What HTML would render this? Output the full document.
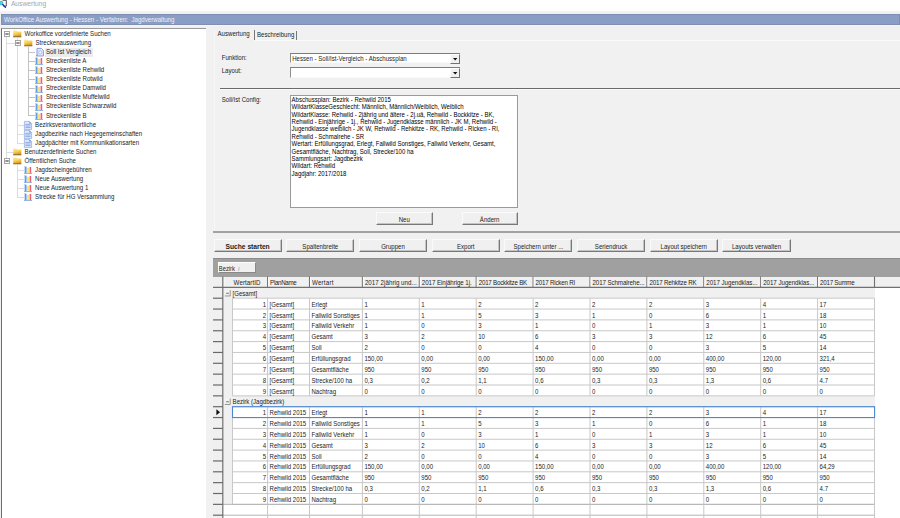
<!DOCTYPE html>
<html><head><meta charset="utf-8"><title>Auswertung</title>
<style>
html,body{margin:0;padding:0;}
body{width:900px;height:518px;overflow:hidden;background:#f0f0f0;position:relative;font-family:"Liberation Sans",sans-serif;}
.t{position:absolute;white-space:pre;}
.b{position:absolute;box-sizing:border-box;}
svg{position:absolute;overflow:visible;}
</style></head><body>

<div class="b" style="left:0.00px;top:0.00px;width:900.00px;height:12.00px;background:#ffffff;background:linear-gradient(#fff 0,#fff 84%,#f0f0f0 100%);"></div>
<div class="t" style="left:10.90px;top:-0.60px;height:10px;line-height:10px;font-size:6.7px;color:#a6a6a6;transform:scaleY(1.16);">Auswertung</div>
<svg style="left:0;top:0" width="8" height="9" viewBox="0 0 8 9"><path d="M2.6 0.3H6.3V6.1H3.4" fill="#fff" stroke="#3c3c3c" stroke-width="0.9"/><circle cx="1.1" cy="3.1" r="2" fill="#4ad6d8" stroke="#3aa4ac" stroke-width="0.5"/><path d="M2.7 4.6L5.4 7.3" stroke="#1630b4" stroke-width="1.4" stroke-linecap="round"/></svg>
<div class="b" style="left:1.00px;top:14.00px;width:899.00px;height:11.20px;background:#8a9ec5;border:1px solid #7d8fb4;"></div>
<div class="t" style="left:4.00px;top:14.60px;height:10px;line-height:10px;font-size:6.15px;color:#eef2fa;transform:scaleY(1.08);">WorkOffice Auswertung - Hessen - Verfahren:  Jagdverwaltung</div>
<div class="b" style="left:1.00px;top:28.00px;width:205.40px;height:492.00px;background:#ffffff;border-left:1px solid #6e6e6e;border-top:1px solid #9a9a9a;"></div>
<div class="b" style="left:206.40px;top:26.40px;width:8.00px;height:492.00px;background:#f1f1f1;"></div>
<div class="b" style="left:214.20px;top:28.60px;width:686.00px;height:203.00px;background:#f1f1f1;border-left:1px solid #f6f6f6;"></div>
<div class="b" style="left:6.20px;top:37.20px;width:0.70px;height:120.98px;background:#dcdcdc;"></div>
<div class="b" style="left:17.40px;top:38.20px;width:0.70px;height:104.84px;background:#dcdcdc;"></div>
<div class="b" style="left:6.20px;top:42.92px;width:8.80px;height:0.70px;background:#dcdcdc;"></div>
<div class="b" style="left:6.20px;top:151.76px;width:6.80px;height:0.70px;background:#dcdcdc;"></div>
<div class="b" style="left:28.40px;top:47.27px;width:0.70px;height:68.56px;background:#c2c2c2;"></div>
<div class="b" style="left:28.40px;top:51.99px;width:6.60px;height:0.70px;background:#c2c2c2;"></div>
<div class="b" style="left:28.40px;top:61.06px;width:6.60px;height:0.70px;background:#c2c2c2;"></div>
<div class="b" style="left:28.40px;top:70.13px;width:6.60px;height:0.70px;background:#c2c2c2;"></div>
<div class="b" style="left:28.40px;top:79.20px;width:6.60px;height:0.70px;background:#c2c2c2;"></div>
<div class="b" style="left:28.40px;top:88.27px;width:6.60px;height:0.70px;background:#c2c2c2;"></div>
<div class="b" style="left:28.40px;top:97.34px;width:6.60px;height:0.70px;background:#c2c2c2;"></div>
<div class="b" style="left:28.40px;top:106.41px;width:6.60px;height:0.70px;background:#c2c2c2;"></div>
<div class="b" style="left:28.40px;top:115.48px;width:6.60px;height:0.70px;background:#c2c2c2;"></div>
<div class="b" style="left:17.40px;top:124.55px;width:6.60px;height:0.70px;background:#dcdcdc;"></div>
<div class="b" style="left:17.40px;top:133.62px;width:6.60px;height:0.70px;background:#dcdcdc;"></div>
<div class="b" style="left:17.40px;top:142.69px;width:6.60px;height:0.70px;background:#dcdcdc;"></div>
<div class="b" style="left:17.40px;top:165.18px;width:0.70px;height:32.28px;background:#dcdcdc;"></div>
<div class="b" style="left:17.40px;top:169.90px;width:6.60px;height:0.70px;background:#dcdcdc;"></div>
<div class="b" style="left:17.40px;top:178.97px;width:6.60px;height:0.70px;background:#dcdcdc;"></div>
<div class="b" style="left:17.40px;top:188.04px;width:6.60px;height:0.70px;background:#dcdcdc;"></div>
<div class="b" style="left:17.40px;top:197.11px;width:6.60px;height:0.70px;background:#dcdcdc;"></div>
<svg style="left:3.70px;top:31.20px" width="6" height="6" viewBox="0 0 6 6"><rect x="0.5" y="0.5" width="5" height="5" fill="#fff" stroke="#9c9c9c" stroke-width="0.9"/><path d="M1.3 3H4.7" stroke="#222" stroke-width="1"/></svg>
<svg style="left:13.30px;top:30.10px" width="9" height="8" viewBox="0 0 9 8"><defs><linearGradient id="fg" x1="0" y1="0" x2="0.3" y2="1"><stop offset="0" stop-color="#fdeea0"/><stop offset="0.55" stop-color="#f7cf55"/><stop offset="1" stop-color="#d99a1c"/></linearGradient></defs><path d="M0.2 0.6 L3.2 0.6 L4 1.6 L8.3 1.6 L8.3 6.8 L0.2 6.8 Z" fill="url(#fg)"/><path d="M0.2 6.8H8.3" stroke="#6b4a12" stroke-width="0.8"/></svg>
<div class="t" style="left:24.60px;top:28.90px;height:10px;line-height:10px;font-size:6.1px;color:#1c1c1c;transform:scaleY(1.16);">Workoffice vordefinierte Suchen</div>
<svg style="left:14.50px;top:40.27px" width="6" height="6" viewBox="0 0 6 6"><rect x="0.5" y="0.5" width="5" height="5" fill="#fff" stroke="#9c9c9c" stroke-width="0.9"/><path d="M1.3 3H4.7" stroke="#222" stroke-width="1"/></svg>
<svg style="left:24.20px;top:39.17px" width="9" height="8" viewBox="0 0 9 8"><defs><linearGradient id="fg" x1="0" y1="0" x2="0.3" y2="1"><stop offset="0" stop-color="#fdeea0"/><stop offset="0.55" stop-color="#f7cf55"/><stop offset="1" stop-color="#d99a1c"/></linearGradient></defs><path d="M0.2 0.6 L3.2 0.6 L4 1.6 L8.3 1.6 L8.3 6.8 L0.2 6.8 Z" fill="url(#fg)"/><path d="M0.2 6.8H8.3" stroke="#6b4a12" stroke-width="0.8"/></svg>
<div class="t" style="left:35.50px;top:37.97px;height:10px;line-height:10px;font-size:6.1px;color:#1c1c1c;transform:scaleY(1.16);">Streckenauswertung</div>
<svg style="left:35.50px;top:48.14px" width="8" height="9" viewBox="0 0 8 9"><path d="M1 0.4 L5.4 0.4 L7.4 2.4 L7.4 8 L1 8 Z" fill="#e6eefc" stroke="#6a86e0" stroke-width="0.8"/><circle cx="4.2" cy="4.4" r="1.7" fill="#f4f8ff" stroke="#8fb0ee" stroke-width="0.8"/><path d="M0 8.2 L1.8 6.8" stroke="#d08a3a" stroke-width="1"/></svg>
<div class="b" style="left:45.00px;top:48.34px;width:47.50px;height:8.20px;background:#ececec;"></div>
<div class="t" style="left:46.00px;top:47.04px;height:10px;line-height:10px;font-size:6.1px;color:#1c1c1c;transform:scaleY(1.16);">Soll Ist Vergleich</div>
<svg style="left:34.90px;top:57.41px" width="8" height="8" viewBox="0 0 8 8"><rect x="0" y="0" width="0.6" height="8" fill="#9cc0f0"/><rect x="0" y="7.1" width="8" height="0.9" fill="#86b0ea"/><rect x="1.1" y="0.6" width="1.4" height="6.5" fill="#4f93e4"/><rect x="3.3" y="1.8" width="1.5" height="5.3" fill="#f4dc50"/><rect x="5.6" y="1" width="1.6" height="6.1" fill="#e85c80"/></svg>
<div class="t" style="left:46.00px;top:56.11px;height:10px;line-height:10px;font-size:6.1px;color:#1c1c1c;transform:scaleY(1.16);">Streckenliste A</div>
<svg style="left:34.90px;top:66.48px" width="8" height="8" viewBox="0 0 8 8"><rect x="0" y="0" width="0.6" height="8" fill="#9cc0f0"/><rect x="0" y="7.1" width="8" height="0.9" fill="#86b0ea"/><rect x="1.1" y="0.6" width="1.4" height="6.5" fill="#4f93e4"/><rect x="3.3" y="1.8" width="1.5" height="5.3" fill="#f4dc50"/><rect x="5.6" y="1" width="1.6" height="6.1" fill="#e85c80"/></svg>
<div class="t" style="left:46.00px;top:65.18px;height:10px;line-height:10px;font-size:6.1px;color:#1c1c1c;transform:scaleY(1.16);">Streckenliste Rehwild</div>
<svg style="left:34.90px;top:75.55px" width="8" height="8" viewBox="0 0 8 8"><rect x="0" y="0" width="0.6" height="8" fill="#9cc0f0"/><rect x="0" y="7.1" width="8" height="0.9" fill="#86b0ea"/><rect x="1.1" y="0.6" width="1.4" height="6.5" fill="#4f93e4"/><rect x="3.3" y="1.8" width="1.5" height="5.3" fill="#f4dc50"/><rect x="5.6" y="1" width="1.6" height="6.1" fill="#e85c80"/></svg>
<div class="t" style="left:46.00px;top:74.25px;height:10px;line-height:10px;font-size:6.1px;color:#1c1c1c;transform:scaleY(1.16);">Streckenliste Rotwild</div>
<svg style="left:34.90px;top:84.62px" width="8" height="8" viewBox="0 0 8 8"><rect x="0" y="0" width="0.6" height="8" fill="#9cc0f0"/><rect x="0" y="7.1" width="8" height="0.9" fill="#86b0ea"/><rect x="1.1" y="0.6" width="1.4" height="6.5" fill="#4f93e4"/><rect x="3.3" y="1.8" width="1.5" height="5.3" fill="#f4dc50"/><rect x="5.6" y="1" width="1.6" height="6.1" fill="#e85c80"/></svg>
<div class="t" style="left:46.00px;top:83.32px;height:10px;line-height:10px;font-size:6.1px;color:#1c1c1c;transform:scaleY(1.16);">Streckenliste Damwild</div>
<svg style="left:34.90px;top:93.69px" width="8" height="8" viewBox="0 0 8 8"><rect x="0" y="0" width="0.6" height="8" fill="#9cc0f0"/><rect x="0" y="7.1" width="8" height="0.9" fill="#86b0ea"/><rect x="1.1" y="0.6" width="1.4" height="6.5" fill="#4f93e4"/><rect x="3.3" y="1.8" width="1.5" height="5.3" fill="#f4dc50"/><rect x="5.6" y="1" width="1.6" height="6.1" fill="#e85c80"/></svg>
<div class="t" style="left:46.00px;top:92.39px;height:10px;line-height:10px;font-size:6.1px;color:#1c1c1c;transform:scaleY(1.16);">Streckenliste Muffelwild</div>
<svg style="left:34.90px;top:102.76px" width="8" height="8" viewBox="0 0 8 8"><rect x="0" y="0" width="0.6" height="8" fill="#9cc0f0"/><rect x="0" y="7.1" width="8" height="0.9" fill="#86b0ea"/><rect x="1.1" y="0.6" width="1.4" height="6.5" fill="#4f93e4"/><rect x="3.3" y="1.8" width="1.5" height="5.3" fill="#f4dc50"/><rect x="5.6" y="1" width="1.6" height="6.1" fill="#e85c80"/></svg>
<div class="t" style="left:46.00px;top:101.46px;height:10px;line-height:10px;font-size:6.1px;color:#1c1c1c;transform:scaleY(1.16);">Streckenliste Schwarzwild</div>
<svg style="left:34.90px;top:111.83px" width="8" height="8" viewBox="0 0 8 8"><rect x="0" y="0" width="0.6" height="8" fill="#9cc0f0"/><rect x="0" y="7.1" width="8" height="0.9" fill="#86b0ea"/><rect x="1.1" y="0.6" width="1.4" height="6.5" fill="#4f93e4"/><rect x="3.3" y="1.8" width="1.5" height="5.3" fill="#f4dc50"/><rect x="5.6" y="1" width="1.6" height="6.1" fill="#e85c80"/></svg>
<div class="t" style="left:46.00px;top:110.53px;height:10px;line-height:10px;font-size:6.1px;color:#1c1c1c;transform:scaleY(1.16);">Streckenliste B</div>
<svg style="left:23.80px;top:120.70px" width="8" height="9" viewBox="0 0 8 9"><path d="M0.4 0.4 L5.4 0.4 L7.6 2.6 L7.6 8.6 L0.4 8.6 Z" fill="#dfe9fa" stroke="#8ea6e0" stroke-width="0.7"/><path d="M5.4 0.4L7.6 2.6H5.4Z" fill="#5b8ae0"/><path d="M1.4 3.4H6.6M1.4 5H6.6M1.4 6.6H6.6" stroke="#86a4e2" stroke-width="0.9"/></svg>
<div class="t" style="left:35.10px;top:119.60px;height:10px;line-height:10px;font-size:6.1px;color:#1c1c1c;transform:scaleY(1.16);">Bezirksverantwortliche</div>
<svg style="left:23.80px;top:129.77px" width="8" height="9" viewBox="0 0 8 9"><path d="M0.4 0.4 L5.4 0.4 L7.6 2.6 L7.6 8.6 L0.4 8.6 Z" fill="#dfe9fa" stroke="#8ea6e0" stroke-width="0.7"/><path d="M5.4 0.4L7.6 2.6H5.4Z" fill="#5b8ae0"/><path d="M1.4 3.4H6.6M1.4 5H6.6M1.4 6.6H6.6" stroke="#86a4e2" stroke-width="0.9"/></svg>
<div class="t" style="left:35.10px;top:128.67px;height:10px;line-height:10px;font-size:6.1px;color:#1c1c1c;transform:scaleY(1.16);">Jagdbezirke nach Hegegemeinschaften</div>
<svg style="left:23.80px;top:138.84px" width="8" height="9" viewBox="0 0 8 9"><path d="M0.4 0.4 L5.4 0.4 L7.6 2.6 L7.6 8.6 L0.4 8.6 Z" fill="#dfe9fa" stroke="#8ea6e0" stroke-width="0.7"/><path d="M5.4 0.4L7.6 2.6H5.4Z" fill="#5b8ae0"/><path d="M1.4 3.4H6.6M1.4 5H6.6M1.4 6.6H6.6" stroke="#86a4e2" stroke-width="0.9"/></svg>
<div class="t" style="left:35.10px;top:137.74px;height:10px;line-height:10px;font-size:6.1px;color:#1c1c1c;transform:scaleY(1.16);">Jagdpächter mit Kommunikationsarten</div>
<svg style="left:13.30px;top:148.01px" width="9" height="8" viewBox="0 0 9 8"><defs><linearGradient id="fg" x1="0" y1="0" x2="0.3" y2="1"><stop offset="0" stop-color="#fdeea0"/><stop offset="0.55" stop-color="#f7cf55"/><stop offset="1" stop-color="#d99a1c"/></linearGradient></defs><path d="M0.2 0.6 L3.2 0.6 L4 1.6 L8.3 1.6 L8.3 6.8 L0.2 6.8 Z" fill="url(#fg)"/><path d="M0.2 6.8H8.3" stroke="#6b4a12" stroke-width="0.8"/></svg>
<div class="t" style="left:24.60px;top:146.81px;height:10px;line-height:10px;font-size:6.1px;color:#1c1c1c;transform:scaleY(1.16);">Benutzerdefinierte Suchen</div>
<svg style="left:3.70px;top:158.18px" width="6" height="6" viewBox="0 0 6 6"><rect x="0.5" y="0.5" width="5" height="5" fill="#fff" stroke="#9c9c9c" stroke-width="0.9"/><path d="M1.3 3H4.7" stroke="#222" stroke-width="1"/></svg>
<svg style="left:13.30px;top:157.08px" width="9" height="8" viewBox="0 0 9 8"><defs><linearGradient id="fg" x1="0" y1="0" x2="0.3" y2="1"><stop offset="0" stop-color="#fdeea0"/><stop offset="0.55" stop-color="#f7cf55"/><stop offset="1" stop-color="#d99a1c"/></linearGradient></defs><path d="M0.2 0.6 L3.2 0.6 L4 1.6 L8.3 1.6 L8.3 6.8 L0.2 6.8 Z" fill="url(#fg)"/><path d="M0.2 6.8H8.3" stroke="#6b4a12" stroke-width="0.8"/></svg>
<div class="t" style="left:24.60px;top:155.88px;height:10px;line-height:10px;font-size:6.1px;color:#1c1c1c;transform:scaleY(1.16);">Öffentlichen Suche</div>
<svg style="left:24.20px;top:166.25px" width="8" height="8" viewBox="0 0 8 8"><rect x="0" y="0" width="0.6" height="8" fill="#9cc0f0"/><rect x="0" y="7.1" width="8" height="0.9" fill="#86b0ea"/><rect x="1.1" y="0.6" width="1.4" height="6.5" fill="#4f93e4"/><rect x="3.3" y="1.8" width="1.5" height="5.3" fill="#f4dc50"/><rect x="5.6" y="1" width="1.6" height="6.1" fill="#e85c80"/></svg>
<div class="t" style="left:35.10px;top:164.95px;height:10px;line-height:10px;font-size:6.1px;color:#1c1c1c;transform:scaleY(1.16);">Jagdscheingebühren</div>
<svg style="left:24.20px;top:175.32px" width="8" height="8" viewBox="0 0 8 8"><rect x="0" y="0" width="0.6" height="8" fill="#9cc0f0"/><rect x="0" y="7.1" width="8" height="0.9" fill="#86b0ea"/><rect x="1.1" y="0.6" width="1.4" height="6.5" fill="#4f93e4"/><rect x="3.3" y="1.8" width="1.5" height="5.3" fill="#f4dc50"/><rect x="5.6" y="1" width="1.6" height="6.1" fill="#e85c80"/></svg>
<div class="t" style="left:35.10px;top:174.02px;height:10px;line-height:10px;font-size:6.1px;color:#1c1c1c;transform:scaleY(1.16);">Neue Auswertung</div>
<svg style="left:24.20px;top:184.39px" width="8" height="8" viewBox="0 0 8 8"><rect x="0" y="0" width="0.6" height="8" fill="#9cc0f0"/><rect x="0" y="7.1" width="8" height="0.9" fill="#86b0ea"/><rect x="1.1" y="0.6" width="1.4" height="6.5" fill="#4f93e4"/><rect x="3.3" y="1.8" width="1.5" height="5.3" fill="#f4dc50"/><rect x="5.6" y="1" width="1.6" height="6.1" fill="#e85c80"/></svg>
<div class="t" style="left:35.10px;top:183.09px;height:10px;line-height:10px;font-size:6.1px;color:#1c1c1c;transform:scaleY(1.16);">Neue Auswertung 1</div>
<svg style="left:24.20px;top:193.46px" width="8" height="8" viewBox="0 0 8 8"><rect x="0" y="0" width="0.6" height="8" fill="#9cc0f0"/><rect x="0" y="7.1" width="8" height="0.9" fill="#86b0ea"/><rect x="1.1" y="0.6" width="1.4" height="6.5" fill="#4f93e4"/><rect x="3.3" y="1.8" width="1.5" height="5.3" fill="#f4dc50"/><rect x="5.6" y="1" width="1.6" height="6.1" fill="#e85c80"/></svg>
<div class="t" style="left:35.10px;top:192.16px;height:10px;line-height:10px;font-size:6.1px;color:#1c1c1c;transform:scaleY(1.16);">Strecke für HG Versammlung</div>
<div class="t" style="left:217.50px;top:29.10px;height:10px;line-height:10px;font-size:6.1px;color:#1c1c1c;transform:scaleY(1.16);">Auswertung</div>
<div class="b" style="left:254.20px;top:30.00px;width:0.80px;height:10.00px;background:#777;"></div>
<div class="t" style="left:257.00px;top:29.90px;height:10px;line-height:10px;font-size:6.1px;color:#1c1c1c;transform:scaleY(1.16);">Beschreibung</div>
<div class="b" style="left:296.20px;top:30.50px;width:0.80px;height:9.50px;background:#777;"></div>
<div class="b" style="left:255.00px;top:39.60px;width:645.00px;height:1.00px;background:#fafafa;"></div>
<div class="b" style="left:1.00px;top:25.20px;width:899.00px;height:1.20px;background:#f6f6f6;"></div>
<div class="t" style="left:221.70px;top:53.30px;height:10px;line-height:10px;font-size:6.1px;color:#1c1c1c;transform:scaleY(1.16);">Funktion:</div>
<div class="t" style="left:221.70px;top:65.90px;height:10px;line-height:10px;font-size:6.1px;color:#1c1c1c;transform:scaleY(1.16);">Layout:</div>
<div class="b" style="left:290.00px;top:53.00px;width:169.80px;height:10.40px;background:#fff;border-top:1px solid #7c7c7c;border-left:1px solid #8e8e8e;border-bottom:1px solid #f8f8f8;"></div>
<div class="b" style="left:449.80px;top:54.00px;width:10.00px;height:9.80px;background:#f0f0f0;border-left:1px solid #fdfdfd;border-top:1px solid #fdfdfd;border-right:1px solid #707070;border-bottom:1px solid #707070;"></div>
<svg style="left:452.90px;top:57.80px" width="5" height="3" viewBox="0 0 5 3"><path d="M0 0H4.4L2.2 2.4Z" fill="#111"/></svg>
<div class="t" style="left:292.20px;top:53.90px;height:10px;line-height:10px;font-size:6.1px;color:#1c1c1c;transform:scaleY(1.16);">Hessen - Soll/Ist-Vergleich - Abschussplan</div>
<div class="b" style="left:290.00px;top:67.00px;width:169.80px;height:10.60px;background:#fff;border-top:1px solid #7c7c7c;border-left:1px solid #8e8e8e;border-bottom:1px solid #f8f8f8;"></div>
<div class="b" style="left:449.80px;top:68.00px;width:10.00px;height:10.00px;background:#f0f0f0;border-left:1px solid #fdfdfd;border-top:1px solid #fdfdfd;border-right:1px solid #707070;border-bottom:1px solid #707070;"></div>
<svg style="left:452.90px;top:71.90px" width="5" height="3" viewBox="0 0 5 3"><path d="M0 0H4.4L2.2 2.4Z" fill="#111"/></svg>
<div class="b" style="left:219.50px;top:87.50px;width:681.00px;height:1.00px;background:#6a6a6a;"></div>
<div class="b" style="left:219.50px;top:88.50px;width:681.00px;height:1.00px;background:#fbfbfb;"></div>
<div class="t" style="left:221.70px;top:95.00px;height:10px;line-height:10px;font-size:6.1px;color:#1c1c1c;transform:scaleY(1.16);">Soll/Ist Config:</div>
<div class="b" style="left:290.00px;top:95.00px;width:228.00px;height:113.00px;background:#fff;border:1px solid #9a9a9a;"></div>
<div class="t" style="left:291.60px;top:94.80px;height:10px;line-height:10px;font-size:6.03px;color:#000;transform:scaleY(1.22);">Abschussplan: Bezirk - Rehwild 2015</div>
<div class="t" style="left:291.60px;top:102.21px;height:10px;line-height:10px;font-size:6.03px;color:#000;transform:scaleY(1.22);">WildartKlasseGeschlecht: Männlich, Männlich/Weiblich, Weiblich</div>
<div class="t" style="left:291.60px;top:109.62px;height:10px;line-height:10px;font-size:6.03px;color:#000;transform:scaleY(1.22);">WildartKlasse: Rehwild - 2jährig und ältere - 2j.uä, Rehwild - Bockkitze - BK,</div>
<div class="t" style="left:291.60px;top:117.03px;height:10px;line-height:10px;font-size:6.03px;color:#000;transform:scaleY(1.22);">Rehwild - Einjährige - 1j., Rehwild - Jugendklasse männlich - JK M, Rehwild -</div>
<div class="t" style="left:291.60px;top:124.44px;height:10px;line-height:10px;font-size:6.03px;color:#000;transform:scaleY(1.22);">Jugendklasse weiblich - JK W, Rehwild - Rehkitze - RK, Rehwild - Ricken - RI,</div>
<div class="t" style="left:291.60px;top:131.85px;height:10px;line-height:10px;font-size:6.03px;color:#000;transform:scaleY(1.22);">Rehwild - Schmalrehe - SR</div>
<div class="t" style="left:291.60px;top:139.26px;height:10px;line-height:10px;font-size:6.03px;color:#000;transform:scaleY(1.22);">Wertart: Erfüllungsgrad, Erlegt, Fallwild Sonstiges, Fallwild Verkehr, Gesamt,</div>
<div class="t" style="left:291.60px;top:146.67px;height:10px;line-height:10px;font-size:6.03px;color:#000;transform:scaleY(1.22);">Gesamtfläche, Nachtrag, Soll, Strecke/100 ha</div>
<div class="t" style="left:291.60px;top:154.08px;height:10px;line-height:10px;font-size:6.03px;color:#000;transform:scaleY(1.22);">Sammlungsart: Jagdbezirk</div>
<div class="t" style="left:291.60px;top:161.49px;height:10px;line-height:10px;font-size:6.03px;color:#000;transform:scaleY(1.22);">Wildart: Rehwild</div>
<div class="t" style="left:291.60px;top:168.90px;height:10px;line-height:10px;font-size:6.03px;color:#000;transform:scaleY(1.22);">Jagdjahr: 2017/2018</div>
<div class="b" style="left:376.00px;top:212.40px;width:56.60px;height:13.00px;background:#f0f0f0;border:1px solid #fafafa;border-right:1px solid #787878;border-bottom:1px solid #787878;box-shadow:inset -1px -1px 0 #c4c4c4;"></div>
<div class="t" style="left:376.00px;top:214.80px;height:10px;line-height:10px;font-size:6.1px;color:#1c1c1c;width:56.60px;text-align:center;transform:scaleY(1.16);">Neu</div>
<div class="b" style="left:461.80px;top:212.40px;width:55.80px;height:13.00px;background:#f0f0f0;border:1px solid #fafafa;border-right:1px solid #787878;border-bottom:1px solid #787878;box-shadow:inset -1px -1px 0 #c4c4c4;"></div>
<div class="t" style="left:461.80px;top:214.80px;height:10px;line-height:10px;font-size:6.1px;color:#1c1c1c;width:55.80px;text-align:center;transform:scaleY(1.16);">Ändern</div>
<div class="b" style="left:213.00px;top:231.00px;width:687.00px;height:1.60px;background:#a2a2a2;"></div>
<div class="b" style="left:213.50px;top:239.40px;width:68.20px;height:13.00px;background:#f0f0f0;border:1px solid #fafafa;border-right:1px solid #787878;border-bottom:1px solid #787878;box-shadow:inset -1px -1px 0 #c4c4c4;"></div>
<div class="t" style="left:213.50px;top:241.80px;height:10px;line-height:10px;font-size:6.7px;color:#1c1c1c;font-weight:bold;width:68.20px;text-align:center;transform:scaleY(1.16);">Suche starten</div>
<div class="b" style="left:286.20px;top:239.40px;width:68.20px;height:13.00px;background:#f0f0f0;border:1px solid #fafafa;border-right:1px solid #787878;border-bottom:1px solid #787878;box-shadow:inset -1px -1px 0 #c4c4c4;"></div>
<div class="t" style="left:286.20px;top:241.80px;height:10px;line-height:10px;font-size:6.1px;color:#1c1c1c;width:68.20px;text-align:center;transform:scaleY(1.16);">Spaltenbreite</div>
<div class="b" style="left:358.90px;top:239.40px;width:68.20px;height:13.00px;background:#f0f0f0;border:1px solid #fafafa;border-right:1px solid #787878;border-bottom:1px solid #787878;box-shadow:inset -1px -1px 0 #c4c4c4;"></div>
<div class="t" style="left:358.90px;top:241.80px;height:10px;line-height:10px;font-size:6.1px;color:#1c1c1c;width:68.20px;text-align:center;transform:scaleY(1.16);">Gruppen</div>
<div class="b" style="left:431.60px;top:239.40px;width:68.20px;height:13.00px;background:#f0f0f0;border:1px solid #fafafa;border-right:1px solid #787878;border-bottom:1px solid #787878;box-shadow:inset -1px -1px 0 #c4c4c4;"></div>
<div class="t" style="left:431.60px;top:241.80px;height:10px;line-height:10px;font-size:6.1px;color:#1c1c1c;width:68.20px;text-align:center;transform:scaleY(1.16);">Export</div>
<div class="b" style="left:504.30px;top:239.40px;width:68.20px;height:13.00px;background:#f0f0f0;border:1px solid #fafafa;border-right:1px solid #787878;border-bottom:1px solid #787878;box-shadow:inset -1px -1px 0 #c4c4c4;"></div>
<div class="t" style="left:504.30px;top:241.80px;height:10px;line-height:10px;font-size:6.1px;color:#1c1c1c;width:68.20px;text-align:center;transform:scaleY(1.16);">Speichern unter ...</div>
<div class="b" style="left:577.00px;top:239.40px;width:68.20px;height:13.00px;background:#f0f0f0;border:1px solid #fafafa;border-right:1px solid #787878;border-bottom:1px solid #787878;box-shadow:inset -1px -1px 0 #c4c4c4;"></div>
<div class="t" style="left:577.00px;top:241.80px;height:10px;line-height:10px;font-size:6.1px;color:#1c1c1c;width:68.20px;text-align:center;transform:scaleY(1.16);">Seriendruck</div>
<div class="b" style="left:649.70px;top:239.40px;width:68.20px;height:13.00px;background:#f0f0f0;border:1px solid #fafafa;border-right:1px solid #787878;border-bottom:1px solid #787878;box-shadow:inset -1px -1px 0 #c4c4c4;"></div>
<div class="t" style="left:649.70px;top:241.80px;height:10px;line-height:10px;font-size:6.1px;color:#1c1c1c;width:68.20px;text-align:center;transform:scaleY(1.16);">Layout speichern</div>
<div class="b" style="left:722.40px;top:239.40px;width:68.20px;height:13.00px;background:#f0f0f0;border:1px solid #fafafa;border-right:1px solid #787878;border-bottom:1px solid #787878;box-shadow:inset -1px -1px 0 #c4c4c4;"></div>
<div class="t" style="left:722.40px;top:241.80px;height:10px;line-height:10px;font-size:6.1px;color:#1c1c1c;width:68.20px;text-align:center;transform:scaleY(1.16);">Layouts verwalten</div>
<div class="b" style="left:213.00px;top:257.60px;width:687.00px;height:19.40px;background:#a0a0a0;border-top:1px solid #8c8c8c;"></div>
<div class="b" style="left:217.50px;top:262.40px;width:38.00px;height:10.60px;background:#f0f0f0;border:1px solid #fff;border-right:1px solid #8a8a8a;border-bottom:1px solid #8a8a8a;"></div>
<div class="t" style="left:218.80px;top:263.70px;height:10px;line-height:10px;font-size:5.8px;color:#1c1c1c;transform:scaleY(1.16);">Bezirk  <span style="font-size:4.5px;color:#666">/</span></div>
<div class="b" style="left:213.00px;top:276.50px;width:687.00px;height:241.50px;background:#fff;"></div>
<div class="b" style="left:213.00px;top:276.50px;width:687.00px;height:10.85px;background:#f0f0f0;"></div>
<div class="b" style="left:213.00px;top:276.50px;width:9.80px;height:241.50px;background:#f0f0f0;"></div>
<div class="b" style="left:222.80px;top:287.35px;width:651.80px;height:10.85px;background:#f0f0f0;"></div>
<div class="b" style="left:222.80px;top:395.85px;width:651.80px;height:10.85px;background:#f0f0f0;"></div>
<div class="b" style="left:222.80px;top:298.20px;width:9.70px;height:97.65px;background:#f0f0f0;"></div>
<div class="b" style="left:222.80px;top:406.70px;width:9.70px;height:97.65px;background:#f0f0f0;"></div>
<svg style="left:0;top:0" width="900" height="518" viewBox="0 0 900 518"><path d="M232.50 298.20L874.60 298.20" stroke="#c8c8c8" stroke-width="1.0"/><path d="M232.50 309.05L874.60 309.05" stroke="#c8c8c8" stroke-width="1.0"/><path d="M232.50 319.90L874.60 319.90" stroke="#c8c8c8" stroke-width="1.0"/><path d="M232.50 330.75L874.60 330.75" stroke="#c8c8c8" stroke-width="1.0"/><path d="M232.50 341.60L874.60 341.60" stroke="#c8c8c8" stroke-width="1.0"/><path d="M232.50 352.45L874.60 352.45" stroke="#c8c8c8" stroke-width="1.0"/><path d="M232.50 363.30L874.60 363.30" stroke="#c8c8c8" stroke-width="1.0"/><path d="M232.50 374.15L874.60 374.15" stroke="#c8c8c8" stroke-width="1.0"/><path d="M232.50 385.00L874.60 385.00" stroke="#c8c8c8" stroke-width="1.0"/><path d="M232.50 395.85L874.60 395.85" stroke="#c8c8c8" stroke-width="1.0"/><path d="M232.50 298.20L232.50 395.85" stroke="#c8c8c8" stroke-width="1.0"/><path d="M267.60 298.20L267.60 395.85" stroke="#c8c8c8" stroke-width="1.0"/><path d="M309.50 298.20L309.50 395.85" stroke="#c8c8c8" stroke-width="1.0"/><path d="M362.40 298.20L362.40 395.85" stroke="#c8c8c8" stroke-width="1.0"/><path d="M419.30 298.20L419.30 395.85" stroke="#c8c8c8" stroke-width="1.0"/><path d="M476.20 298.20L476.20 395.85" stroke="#c8c8c8" stroke-width="1.0"/><path d="M533.10 298.20L533.10 395.85" stroke="#c8c8c8" stroke-width="1.0"/><path d="M590.00 298.20L590.00 395.85" stroke="#c8c8c8" stroke-width="1.0"/><path d="M646.90 298.20L646.90 395.85" stroke="#c8c8c8" stroke-width="1.0"/><path d="M703.80 298.20L703.80 395.85" stroke="#c8c8c8" stroke-width="1.0"/><path d="M760.70 298.20L760.70 395.85" stroke="#c8c8c8" stroke-width="1.0"/><path d="M817.60 298.20L817.60 395.85" stroke="#c8c8c8" stroke-width="1.0"/><path d="M874.50 298.20L874.50 395.85" stroke="#c8c8c8" stroke-width="1.0"/><path d="M232.50 406.70L874.60 406.70" stroke="#c8c8c8" stroke-width="1.0"/><path d="M232.50 417.55L874.60 417.55" stroke="#c8c8c8" stroke-width="1.0"/><path d="M232.50 428.40L874.60 428.40" stroke="#c8c8c8" stroke-width="1.0"/><path d="M232.50 439.25L874.60 439.25" stroke="#c8c8c8" stroke-width="1.0"/><path d="M232.50 450.10L874.60 450.10" stroke="#c8c8c8" stroke-width="1.0"/><path d="M232.50 460.95L874.60 460.95" stroke="#c8c8c8" stroke-width="1.0"/><path d="M232.50 471.80L874.60 471.80" stroke="#c8c8c8" stroke-width="1.0"/><path d="M232.50 482.65L874.60 482.65" stroke="#c8c8c8" stroke-width="1.0"/><path d="M232.50 493.50L874.60 493.50" stroke="#c8c8c8" stroke-width="1.0"/><path d="M232.50 504.35L874.60 504.35" stroke="#c8c8c8" stroke-width="1.0"/><path d="M232.50 406.70L232.50 504.35" stroke="#c8c8c8" stroke-width="1.0"/><path d="M267.60 406.70L267.60 504.35" stroke="#c8c8c8" stroke-width="1.0"/><path d="M309.50 406.70L309.50 504.35" stroke="#c8c8c8" stroke-width="1.0"/><path d="M362.40 406.70L362.40 504.35" stroke="#c8c8c8" stroke-width="1.0"/><path d="M419.30 406.70L419.30 504.35" stroke="#c8c8c8" stroke-width="1.0"/><path d="M476.20 406.70L476.20 504.35" stroke="#c8c8c8" stroke-width="1.0"/><path d="M533.10 406.70L533.10 504.35" stroke="#c8c8c8" stroke-width="1.0"/><path d="M590.00 406.70L590.00 504.35" stroke="#c8c8c8" stroke-width="1.0"/><path d="M646.90 406.70L646.90 504.35" stroke="#c8c8c8" stroke-width="1.0"/><path d="M703.80 406.70L703.80 504.35" stroke="#c8c8c8" stroke-width="1.0"/><path d="M760.70 406.70L760.70 504.35" stroke="#c8c8c8" stroke-width="1.0"/><path d="M817.60 406.70L817.60 504.35" stroke="#c8c8c8" stroke-width="1.0"/><path d="M874.50 406.70L874.50 504.35" stroke="#c8c8c8" stroke-width="1.0"/><path d="M222.80 504.35L874.60 504.35" stroke="#b4b4b4" stroke-width="1.0"/><path d="M222.80 515.20L874.60 515.20" stroke="#b4b4b4" stroke-width="1.0"/><path d="M267.60 504.35L267.60 518.00" stroke="#c8c8c8" stroke-width="1.0"/><path d="M309.50 504.35L309.50 518.00" stroke="#c8c8c8" stroke-width="1.0"/><path d="M362.40 504.35L362.40 518.00" stroke="#c8c8c8" stroke-width="1.0"/><path d="M419.30 504.35L419.30 518.00" stroke="#c8c8c8" stroke-width="1.0"/><path d="M476.20 504.35L476.20 518.00" stroke="#c8c8c8" stroke-width="1.0"/><path d="M533.10 504.35L533.10 518.00" stroke="#c8c8c8" stroke-width="1.0"/><path d="M590.00 504.35L590.00 518.00" stroke="#c8c8c8" stroke-width="1.0"/><path d="M646.90 504.35L646.90 518.00" stroke="#c8c8c8" stroke-width="1.0"/><path d="M703.80 504.35L703.80 518.00" stroke="#c8c8c8" stroke-width="1.0"/><path d="M760.70 504.35L760.70 518.00" stroke="#c8c8c8" stroke-width="1.0"/><path d="M817.60 504.35L817.60 518.00" stroke="#c8c8c8" stroke-width="1.0"/><path d="M874.50 504.35L874.50 518.00" stroke="#c8c8c8" stroke-width="1.0"/><path d="M224.00 277.00L224.00 286.85" stroke="#ffffff" stroke-width="0.9"/><path d="M267.60 276.50L267.60 287.35" stroke="#707070" stroke-width="1.1"/><path d="M268.60 277.00L268.60 286.85" stroke="#ffffff" stroke-width="0.9"/><path d="M309.50 276.50L309.50 287.35" stroke="#707070" stroke-width="1.1"/><path d="M310.50 277.00L310.50 286.85" stroke="#ffffff" stroke-width="0.9"/><path d="M362.40 276.50L362.40 287.35" stroke="#707070" stroke-width="1.1"/><path d="M363.40 277.00L363.40 286.85" stroke="#ffffff" stroke-width="0.9"/><path d="M419.30 276.50L419.30 287.35" stroke="#707070" stroke-width="1.1"/><path d="M420.30 277.00L420.30 286.85" stroke="#ffffff" stroke-width="0.9"/><path d="M476.20 276.50L476.20 287.35" stroke="#707070" stroke-width="1.1"/><path d="M477.20 277.00L477.20 286.85" stroke="#ffffff" stroke-width="0.9"/><path d="M533.10 276.50L533.10 287.35" stroke="#707070" stroke-width="1.1"/><path d="M534.10 277.00L534.10 286.85" stroke="#ffffff" stroke-width="0.9"/><path d="M590.00 276.50L590.00 287.35" stroke="#707070" stroke-width="1.1"/><path d="M591.00 277.00L591.00 286.85" stroke="#ffffff" stroke-width="0.9"/><path d="M646.90 276.50L646.90 287.35" stroke="#707070" stroke-width="1.1"/><path d="M647.90 277.00L647.90 286.85" stroke="#ffffff" stroke-width="0.9"/><path d="M703.80 276.50L703.80 287.35" stroke="#707070" stroke-width="1.1"/><path d="M704.80 277.00L704.80 286.85" stroke="#ffffff" stroke-width="0.9"/><path d="M760.70 276.50L760.70 287.35" stroke="#707070" stroke-width="1.1"/><path d="M761.70 277.00L761.70 286.85" stroke="#ffffff" stroke-width="0.9"/><path d="M817.60 276.50L817.60 287.35" stroke="#707070" stroke-width="1.1"/><path d="M818.60 277.00L818.60 286.85" stroke="#ffffff" stroke-width="0.9"/><path d="M874.50 276.50L874.50 287.35" stroke="#707070" stroke-width="1.1"/><path d="M213.00 287.35L900.00 287.35" stroke="#707070" stroke-width="1.1"/><path d="M222.80 276.50L222.80 518.00" stroke="#707070" stroke-width="1.2"/><path d="M213.00 298.20L222.80 298.20" stroke="#686868" stroke-width="1.2"/><path d="M213.00 309.05L222.80 309.05" stroke="#686868" stroke-width="1.2"/><path d="M213.00 319.90L222.80 319.90" stroke="#686868" stroke-width="1.2"/><path d="M213.00 330.75L222.80 330.75" stroke="#686868" stroke-width="1.2"/><path d="M213.00 341.60L222.80 341.60" stroke="#686868" stroke-width="1.2"/><path d="M213.00 352.45L222.80 352.45" stroke="#686868" stroke-width="1.2"/><path d="M213.00 363.30L222.80 363.30" stroke="#686868" stroke-width="1.2"/><path d="M213.00 374.15L222.80 374.15" stroke="#686868" stroke-width="1.2"/><path d="M213.00 385.00L222.80 385.00" stroke="#686868" stroke-width="1.2"/><path d="M213.00 395.85L222.80 395.85" stroke="#686868" stroke-width="1.2"/><path d="M213.00 406.70L222.80 406.70" stroke="#686868" stroke-width="1.2"/><path d="M213.00 417.55L222.80 417.55" stroke="#686868" stroke-width="1.2"/><path d="M213.00 428.40L222.80 428.40" stroke="#686868" stroke-width="1.2"/><path d="M213.00 439.25L222.80 439.25" stroke="#686868" stroke-width="1.2"/><path d="M213.00 450.10L222.80 450.10" stroke="#686868" stroke-width="1.2"/><path d="M213.00 460.95L222.80 460.95" stroke="#686868" stroke-width="1.2"/><path d="M213.00 471.80L222.80 471.80" stroke="#686868" stroke-width="1.2"/><path d="M213.00 482.65L222.80 482.65" stroke="#686868" stroke-width="1.2"/><path d="M213.00 493.50L222.80 493.50" stroke="#686868" stroke-width="1.2"/><path d="M213.00 504.35L222.80 504.35" stroke="#686868" stroke-width="1.2"/><path d="M213.00 515.20L222.80 515.20" stroke="#686868" stroke-width="1.2"/><path d="M213.00 526.05L222.80 526.05" stroke="#686868" stroke-width="1.2"/><rect x="232.50" y="406.70" width="642.10" height="10.85" fill="none" stroke="#4a88d6" stroke-width="1.1"/><path d="M216.4 409.20L220 412.20L216.4 415.20Z" fill="#111"/></svg>
<div class="t" style="left:233.60px;top:278.43px;height:10px;line-height:10px;font-size:6.2px;color:#1c1c1c;transform:scaleY(1.16);letter-spacing:0.065px;">WertartID</div>
<div class="t" style="left:270.10px;top:278.43px;height:10px;line-height:10px;font-size:6.2px;color:#1c1c1c;transform:scaleY(1.16);letter-spacing:-0.319px;">PlanName</div>
<div class="t" style="left:312.00px;top:278.43px;height:10px;line-height:10px;font-size:6.2px;color:#1c1c1c;transform:scaleY(1.16);letter-spacing:0.213px;">Wertart</div>
<div class="t" style="left:364.90px;top:278.43px;height:10px;line-height:10px;font-size:6.2px;color:#1c1c1c;transform:scaleY(1.16);letter-spacing:0.034px;">2017 2jährig und...</div>
<div class="t" style="left:421.80px;top:278.43px;height:10px;line-height:10px;font-size:6.2px;color:#1c1c1c;transform:scaleY(1.16);letter-spacing:-0.072px;">2017 Einjährige 1j.</div>
<div class="t" style="left:478.70px;top:278.43px;height:10px;line-height:10px;font-size:6.2px;color:#1c1c1c;transform:scaleY(1.16);letter-spacing:-0.214px;">2017 Bockkitze BK</div>
<div class="t" style="left:535.60px;top:278.43px;height:10px;line-height:10px;font-size:6.2px;color:#1c1c1c;transform:scaleY(1.16);letter-spacing:-0.214px;">2017 Ricken RI</div>
<div class="t" style="left:592.50px;top:278.43px;height:10px;line-height:10px;font-size:6.2px;color:#1c1c1c;transform:scaleY(1.16);letter-spacing:-0.098px;">2017 Schmalrehe...</div>
<div class="t" style="left:649.40px;top:278.43px;height:10px;line-height:10px;font-size:6.2px;color:#1c1c1c;transform:scaleY(1.16);letter-spacing:-0.173px;">2017 Rehkitze RK</div>
<div class="t" style="left:706.30px;top:278.43px;height:10px;line-height:10px;font-size:6.2px;color:#1c1c1c;transform:scaleY(1.16);letter-spacing:-0.047px;">2017 Jugendklas...</div>
<div class="t" style="left:763.20px;top:278.43px;height:10px;line-height:10px;font-size:6.2px;color:#1c1c1c;transform:scaleY(1.16);letter-spacing:-0.047px;">2017 Jugendklas...</div>
<div class="t" style="left:820.10px;top:278.43px;height:10px;line-height:10px;font-size:6.2px;color:#1c1c1c;transform:scaleY(1.16);letter-spacing:-0.248px;">2017 Summe</div>
<svg style="left:0;top:0" width="900" height="518" viewBox="0 0 900 518"><rect x="224.8" y="290.15" width="5.4" height="5.8" fill="#f4f4f4"/><path d="M230.2 290.15V295.95H224.8" fill="none" stroke="#8a8a8a" stroke-width="0.9"/><path d="M226.2 293.25H228.8" stroke="#444" stroke-width="0.8"/></svg>
<div class="t" style="left:232.60px;top:288.88px;height:10px;line-height:10px;font-size:6.05px;color:#1c1c1c;transform:scaleY(1.16);">[Gesamt]</div>
<div class="t" style="left:232.50px;top:299.73px;height:10px;line-height:10px;font-size:6.05px;color:#1c1c1c;width:33.70px;text-align:right;transform:scaleY(1.16);">1</div>
<div class="t" style="left:269.60px;top:299.73px;height:10px;line-height:10px;font-size:6.05px;color:#1c1c1c;transform:scaleY(1.16);">[Gesamt]</div>
<div class="t" style="left:311.50px;top:299.73px;height:10px;line-height:10px;font-size:6.05px;color:#1c1c1c;transform:scaleY(1.16);">Erlegt</div>
<div class="t" style="left:364.40px;top:299.73px;height:10px;line-height:10px;font-size:6.05px;color:#1c1c1c;transform:scaleY(1.16);">1</div>
<div class="t" style="left:421.30px;top:299.73px;height:10px;line-height:10px;font-size:6.05px;color:#1c1c1c;transform:scaleY(1.16);">1</div>
<div class="t" style="left:478.20px;top:299.73px;height:10px;line-height:10px;font-size:6.05px;color:#1c1c1c;transform:scaleY(1.16);">2</div>
<div class="t" style="left:535.10px;top:299.73px;height:10px;line-height:10px;font-size:6.05px;color:#1c1c1c;transform:scaleY(1.16);">2</div>
<div class="t" style="left:592.00px;top:299.73px;height:10px;line-height:10px;font-size:6.05px;color:#1c1c1c;transform:scaleY(1.16);">2</div>
<div class="t" style="left:648.90px;top:299.73px;height:10px;line-height:10px;font-size:6.05px;color:#1c1c1c;transform:scaleY(1.16);">2</div>
<div class="t" style="left:705.80px;top:299.73px;height:10px;line-height:10px;font-size:6.05px;color:#1c1c1c;transform:scaleY(1.16);">3</div>
<div class="t" style="left:762.70px;top:299.73px;height:10px;line-height:10px;font-size:6.05px;color:#1c1c1c;transform:scaleY(1.16);">4</div>
<div class="t" style="left:819.60px;top:299.73px;height:10px;line-height:10px;font-size:6.05px;color:#1c1c1c;transform:scaleY(1.16);">17</div>
<div class="t" style="left:232.50px;top:310.58px;height:10px;line-height:10px;font-size:6.05px;color:#1c1c1c;width:33.70px;text-align:right;transform:scaleY(1.16);">2</div>
<div class="t" style="left:269.60px;top:310.58px;height:10px;line-height:10px;font-size:6.05px;color:#1c1c1c;transform:scaleY(1.16);">[Gesamt]</div>
<div class="t" style="left:311.50px;top:310.58px;height:10px;line-height:10px;font-size:6.05px;color:#1c1c1c;transform:scaleY(1.16);">Fallwild Sonstiges</div>
<div class="t" style="left:364.40px;top:310.58px;height:10px;line-height:10px;font-size:6.05px;color:#1c1c1c;transform:scaleY(1.16);">1</div>
<div class="t" style="left:421.30px;top:310.58px;height:10px;line-height:10px;font-size:6.05px;color:#1c1c1c;transform:scaleY(1.16);">1</div>
<div class="t" style="left:478.20px;top:310.58px;height:10px;line-height:10px;font-size:6.05px;color:#1c1c1c;transform:scaleY(1.16);">5</div>
<div class="t" style="left:535.10px;top:310.58px;height:10px;line-height:10px;font-size:6.05px;color:#1c1c1c;transform:scaleY(1.16);">3</div>
<div class="t" style="left:592.00px;top:310.58px;height:10px;line-height:10px;font-size:6.05px;color:#1c1c1c;transform:scaleY(1.16);">1</div>
<div class="t" style="left:648.90px;top:310.58px;height:10px;line-height:10px;font-size:6.05px;color:#1c1c1c;transform:scaleY(1.16);">0</div>
<div class="t" style="left:705.80px;top:310.58px;height:10px;line-height:10px;font-size:6.05px;color:#1c1c1c;transform:scaleY(1.16);">6</div>
<div class="t" style="left:762.70px;top:310.58px;height:10px;line-height:10px;font-size:6.05px;color:#1c1c1c;transform:scaleY(1.16);">1</div>
<div class="t" style="left:819.60px;top:310.58px;height:10px;line-height:10px;font-size:6.05px;color:#1c1c1c;transform:scaleY(1.16);">18</div>
<div class="t" style="left:232.50px;top:321.43px;height:10px;line-height:10px;font-size:6.05px;color:#1c1c1c;width:33.70px;text-align:right;transform:scaleY(1.16);">3</div>
<div class="t" style="left:269.60px;top:321.43px;height:10px;line-height:10px;font-size:6.05px;color:#1c1c1c;transform:scaleY(1.16);">[Gesamt]</div>
<div class="t" style="left:311.50px;top:321.43px;height:10px;line-height:10px;font-size:6.05px;color:#1c1c1c;transform:scaleY(1.16);">Fallwild Verkehr</div>
<div class="t" style="left:364.40px;top:321.43px;height:10px;line-height:10px;font-size:6.05px;color:#1c1c1c;transform:scaleY(1.16);">1</div>
<div class="t" style="left:421.30px;top:321.43px;height:10px;line-height:10px;font-size:6.05px;color:#1c1c1c;transform:scaleY(1.16);">0</div>
<div class="t" style="left:478.20px;top:321.43px;height:10px;line-height:10px;font-size:6.05px;color:#1c1c1c;transform:scaleY(1.16);">3</div>
<div class="t" style="left:535.10px;top:321.43px;height:10px;line-height:10px;font-size:6.05px;color:#1c1c1c;transform:scaleY(1.16);">1</div>
<div class="t" style="left:592.00px;top:321.43px;height:10px;line-height:10px;font-size:6.05px;color:#1c1c1c;transform:scaleY(1.16);">0</div>
<div class="t" style="left:648.90px;top:321.43px;height:10px;line-height:10px;font-size:6.05px;color:#1c1c1c;transform:scaleY(1.16);">1</div>
<div class="t" style="left:705.80px;top:321.43px;height:10px;line-height:10px;font-size:6.05px;color:#1c1c1c;transform:scaleY(1.16);">3</div>
<div class="t" style="left:762.70px;top:321.43px;height:10px;line-height:10px;font-size:6.05px;color:#1c1c1c;transform:scaleY(1.16);">1</div>
<div class="t" style="left:819.60px;top:321.43px;height:10px;line-height:10px;font-size:6.05px;color:#1c1c1c;transform:scaleY(1.16);">10</div>
<div class="t" style="left:232.50px;top:332.28px;height:10px;line-height:10px;font-size:6.05px;color:#1c1c1c;width:33.70px;text-align:right;transform:scaleY(1.16);">4</div>
<div class="t" style="left:269.60px;top:332.28px;height:10px;line-height:10px;font-size:6.05px;color:#1c1c1c;transform:scaleY(1.16);">[Gesamt]</div>
<div class="t" style="left:311.50px;top:332.28px;height:10px;line-height:10px;font-size:6.05px;color:#1c1c1c;transform:scaleY(1.16);">Gesamt</div>
<div class="t" style="left:364.40px;top:332.28px;height:10px;line-height:10px;font-size:6.05px;color:#1c1c1c;transform:scaleY(1.16);">3</div>
<div class="t" style="left:421.30px;top:332.28px;height:10px;line-height:10px;font-size:6.05px;color:#1c1c1c;transform:scaleY(1.16);">2</div>
<div class="t" style="left:478.20px;top:332.28px;height:10px;line-height:10px;font-size:6.05px;color:#1c1c1c;transform:scaleY(1.16);">10</div>
<div class="t" style="left:535.10px;top:332.28px;height:10px;line-height:10px;font-size:6.05px;color:#1c1c1c;transform:scaleY(1.16);">6</div>
<div class="t" style="left:592.00px;top:332.28px;height:10px;line-height:10px;font-size:6.05px;color:#1c1c1c;transform:scaleY(1.16);">3</div>
<div class="t" style="left:648.90px;top:332.28px;height:10px;line-height:10px;font-size:6.05px;color:#1c1c1c;transform:scaleY(1.16);">3</div>
<div class="t" style="left:705.80px;top:332.28px;height:10px;line-height:10px;font-size:6.05px;color:#1c1c1c;transform:scaleY(1.16);">12</div>
<div class="t" style="left:762.70px;top:332.28px;height:10px;line-height:10px;font-size:6.05px;color:#1c1c1c;transform:scaleY(1.16);">6</div>
<div class="t" style="left:819.60px;top:332.28px;height:10px;line-height:10px;font-size:6.05px;color:#1c1c1c;transform:scaleY(1.16);">45</div>
<div class="t" style="left:232.50px;top:343.13px;height:10px;line-height:10px;font-size:6.05px;color:#1c1c1c;width:33.70px;text-align:right;transform:scaleY(1.16);">5</div>
<div class="t" style="left:269.60px;top:343.13px;height:10px;line-height:10px;font-size:6.05px;color:#1c1c1c;transform:scaleY(1.16);">[Gesamt]</div>
<div class="t" style="left:311.50px;top:343.13px;height:10px;line-height:10px;font-size:6.05px;color:#1c1c1c;transform:scaleY(1.16);">Soll</div>
<div class="t" style="left:364.40px;top:343.13px;height:10px;line-height:10px;font-size:6.05px;color:#1c1c1c;transform:scaleY(1.16);">2</div>
<div class="t" style="left:421.30px;top:343.13px;height:10px;line-height:10px;font-size:6.05px;color:#1c1c1c;transform:scaleY(1.16);">0</div>
<div class="t" style="left:478.20px;top:343.13px;height:10px;line-height:10px;font-size:6.05px;color:#1c1c1c;transform:scaleY(1.16);">0</div>
<div class="t" style="left:535.10px;top:343.13px;height:10px;line-height:10px;font-size:6.05px;color:#1c1c1c;transform:scaleY(1.16);">4</div>
<div class="t" style="left:592.00px;top:343.13px;height:10px;line-height:10px;font-size:6.05px;color:#1c1c1c;transform:scaleY(1.16);">0</div>
<div class="t" style="left:648.90px;top:343.13px;height:10px;line-height:10px;font-size:6.05px;color:#1c1c1c;transform:scaleY(1.16);">0</div>
<div class="t" style="left:705.80px;top:343.13px;height:10px;line-height:10px;font-size:6.05px;color:#1c1c1c;transform:scaleY(1.16);">3</div>
<div class="t" style="left:762.70px;top:343.13px;height:10px;line-height:10px;font-size:6.05px;color:#1c1c1c;transform:scaleY(1.16);">5</div>
<div class="t" style="left:819.60px;top:343.13px;height:10px;line-height:10px;font-size:6.05px;color:#1c1c1c;transform:scaleY(1.16);">14</div>
<div class="t" style="left:232.50px;top:353.98px;height:10px;line-height:10px;font-size:6.05px;color:#1c1c1c;width:33.70px;text-align:right;transform:scaleY(1.16);">6</div>
<div class="t" style="left:269.60px;top:353.98px;height:10px;line-height:10px;font-size:6.05px;color:#1c1c1c;transform:scaleY(1.16);">[Gesamt]</div>
<div class="t" style="left:311.50px;top:353.98px;height:10px;line-height:10px;font-size:6.05px;color:#1c1c1c;transform:scaleY(1.16);">Erfüllungsgrad</div>
<div class="t" style="left:364.40px;top:353.98px;height:10px;line-height:10px;font-size:6.05px;color:#1c1c1c;transform:scaleY(1.16);">150,00</div>
<div class="t" style="left:421.30px;top:353.98px;height:10px;line-height:10px;font-size:6.05px;color:#1c1c1c;transform:scaleY(1.16);">0,00</div>
<div class="t" style="left:478.20px;top:353.98px;height:10px;line-height:10px;font-size:6.05px;color:#1c1c1c;transform:scaleY(1.16);">0,00</div>
<div class="t" style="left:535.10px;top:353.98px;height:10px;line-height:10px;font-size:6.05px;color:#1c1c1c;transform:scaleY(1.16);">150,00</div>
<div class="t" style="left:592.00px;top:353.98px;height:10px;line-height:10px;font-size:6.05px;color:#1c1c1c;transform:scaleY(1.16);">0,00</div>
<div class="t" style="left:648.90px;top:353.98px;height:10px;line-height:10px;font-size:6.05px;color:#1c1c1c;transform:scaleY(1.16);">0,00</div>
<div class="t" style="left:705.80px;top:353.98px;height:10px;line-height:10px;font-size:6.05px;color:#1c1c1c;transform:scaleY(1.16);">400,00</div>
<div class="t" style="left:762.70px;top:353.98px;height:10px;line-height:10px;font-size:6.05px;color:#1c1c1c;transform:scaleY(1.16);">120,00</div>
<div class="t" style="left:819.60px;top:353.98px;height:10px;line-height:10px;font-size:6.05px;color:#1c1c1c;transform:scaleY(1.16);">321,4</div>
<div class="t" style="left:232.50px;top:364.83px;height:10px;line-height:10px;font-size:6.05px;color:#1c1c1c;width:33.70px;text-align:right;transform:scaleY(1.16);">7</div>
<div class="t" style="left:269.60px;top:364.83px;height:10px;line-height:10px;font-size:6.05px;color:#1c1c1c;transform:scaleY(1.16);">[Gesamt]</div>
<div class="t" style="left:311.50px;top:364.83px;height:10px;line-height:10px;font-size:6.05px;color:#1c1c1c;transform:scaleY(1.16);">Gesamtfläche</div>
<div class="t" style="left:364.40px;top:364.83px;height:10px;line-height:10px;font-size:6.05px;color:#1c1c1c;transform:scaleY(1.16);">950</div>
<div class="t" style="left:421.30px;top:364.83px;height:10px;line-height:10px;font-size:6.05px;color:#1c1c1c;transform:scaleY(1.16);">950</div>
<div class="t" style="left:478.20px;top:364.83px;height:10px;line-height:10px;font-size:6.05px;color:#1c1c1c;transform:scaleY(1.16);">950</div>
<div class="t" style="left:535.10px;top:364.83px;height:10px;line-height:10px;font-size:6.05px;color:#1c1c1c;transform:scaleY(1.16);">950</div>
<div class="t" style="left:592.00px;top:364.83px;height:10px;line-height:10px;font-size:6.05px;color:#1c1c1c;transform:scaleY(1.16);">950</div>
<div class="t" style="left:648.90px;top:364.83px;height:10px;line-height:10px;font-size:6.05px;color:#1c1c1c;transform:scaleY(1.16);">950</div>
<div class="t" style="left:705.80px;top:364.83px;height:10px;line-height:10px;font-size:6.05px;color:#1c1c1c;transform:scaleY(1.16);">950</div>
<div class="t" style="left:762.70px;top:364.83px;height:10px;line-height:10px;font-size:6.05px;color:#1c1c1c;transform:scaleY(1.16);">950</div>
<div class="t" style="left:819.60px;top:364.83px;height:10px;line-height:10px;font-size:6.05px;color:#1c1c1c;transform:scaleY(1.16);">950</div>
<div class="t" style="left:232.50px;top:375.68px;height:10px;line-height:10px;font-size:6.05px;color:#1c1c1c;width:33.70px;text-align:right;transform:scaleY(1.16);">8</div>
<div class="t" style="left:269.60px;top:375.68px;height:10px;line-height:10px;font-size:6.05px;color:#1c1c1c;transform:scaleY(1.16);">[Gesamt]</div>
<div class="t" style="left:311.50px;top:375.68px;height:10px;line-height:10px;font-size:6.05px;color:#1c1c1c;transform:scaleY(1.16);">Strecke/100 ha</div>
<div class="t" style="left:364.40px;top:375.68px;height:10px;line-height:10px;font-size:6.05px;color:#1c1c1c;transform:scaleY(1.16);">0,3</div>
<div class="t" style="left:421.30px;top:375.68px;height:10px;line-height:10px;font-size:6.05px;color:#1c1c1c;transform:scaleY(1.16);">0,2</div>
<div class="t" style="left:478.20px;top:375.68px;height:10px;line-height:10px;font-size:6.05px;color:#1c1c1c;transform:scaleY(1.16);">1,1</div>
<div class="t" style="left:535.10px;top:375.68px;height:10px;line-height:10px;font-size:6.05px;color:#1c1c1c;transform:scaleY(1.16);">0,6</div>
<div class="t" style="left:592.00px;top:375.68px;height:10px;line-height:10px;font-size:6.05px;color:#1c1c1c;transform:scaleY(1.16);">0,3</div>
<div class="t" style="left:648.90px;top:375.68px;height:10px;line-height:10px;font-size:6.05px;color:#1c1c1c;transform:scaleY(1.16);">0,3</div>
<div class="t" style="left:705.80px;top:375.68px;height:10px;line-height:10px;font-size:6.05px;color:#1c1c1c;transform:scaleY(1.16);">1,3</div>
<div class="t" style="left:762.70px;top:375.68px;height:10px;line-height:10px;font-size:6.05px;color:#1c1c1c;transform:scaleY(1.16);">0,6</div>
<div class="t" style="left:819.60px;top:375.68px;height:10px;line-height:10px;font-size:6.05px;color:#1c1c1c;transform:scaleY(1.16);">4.7</div>
<div class="t" style="left:232.50px;top:386.53px;height:10px;line-height:10px;font-size:6.05px;color:#1c1c1c;width:33.70px;text-align:right;transform:scaleY(1.16);">9</div>
<div class="t" style="left:269.60px;top:386.53px;height:10px;line-height:10px;font-size:6.05px;color:#1c1c1c;transform:scaleY(1.16);">[Gesamt]</div>
<div class="t" style="left:311.50px;top:386.53px;height:10px;line-height:10px;font-size:6.05px;color:#1c1c1c;transform:scaleY(1.16);">Nachtrag</div>
<div class="t" style="left:364.40px;top:386.53px;height:10px;line-height:10px;font-size:6.05px;color:#1c1c1c;transform:scaleY(1.16);">0</div>
<div class="t" style="left:421.30px;top:386.53px;height:10px;line-height:10px;font-size:6.05px;color:#1c1c1c;transform:scaleY(1.16);">0</div>
<div class="t" style="left:478.20px;top:386.53px;height:10px;line-height:10px;font-size:6.05px;color:#1c1c1c;transform:scaleY(1.16);">0</div>
<div class="t" style="left:535.10px;top:386.53px;height:10px;line-height:10px;font-size:6.05px;color:#1c1c1c;transform:scaleY(1.16);">0</div>
<div class="t" style="left:592.00px;top:386.53px;height:10px;line-height:10px;font-size:6.05px;color:#1c1c1c;transform:scaleY(1.16);">0</div>
<div class="t" style="left:648.90px;top:386.53px;height:10px;line-height:10px;font-size:6.05px;color:#1c1c1c;transform:scaleY(1.16);">0</div>
<div class="t" style="left:705.80px;top:386.53px;height:10px;line-height:10px;font-size:6.05px;color:#1c1c1c;transform:scaleY(1.16);">0</div>
<div class="t" style="left:762.70px;top:386.53px;height:10px;line-height:10px;font-size:6.05px;color:#1c1c1c;transform:scaleY(1.16);">0</div>
<div class="t" style="left:819.60px;top:386.53px;height:10px;line-height:10px;font-size:6.05px;color:#1c1c1c;transform:scaleY(1.16);">0</div>
<svg style="left:0;top:0" width="900" height="518" viewBox="0 0 900 518"><rect x="224.8" y="398.65" width="5.4" height="5.8" fill="#f4f4f4"/><path d="M230.2 398.65V404.45H224.8" fill="none" stroke="#8a8a8a" stroke-width="0.9"/><path d="M226.2 401.75H228.8" stroke="#444" stroke-width="0.8"/></svg>
<div class="t" style="left:232.60px;top:397.38px;height:10px;line-height:10px;font-size:6.05px;color:#1c1c1c;transform:scaleY(1.16);">Bezirk (Jagdbezirk)</div>
<div class="t" style="left:232.50px;top:408.23px;height:10px;line-height:10px;font-size:6.05px;color:#1c1c1c;width:33.70px;text-align:right;transform:scaleY(1.16);">1</div>
<div class="t" style="left:269.60px;top:408.23px;height:10px;line-height:10px;font-size:6.05px;color:#1c1c1c;transform:scaleY(1.16);">Rehwild 2015</div>
<div class="t" style="left:311.50px;top:408.23px;height:10px;line-height:10px;font-size:6.05px;color:#1c1c1c;transform:scaleY(1.16);">Erlegt</div>
<div class="t" style="left:364.40px;top:408.23px;height:10px;line-height:10px;font-size:6.05px;color:#1c1c1c;transform:scaleY(1.16);">1</div>
<div class="t" style="left:421.30px;top:408.23px;height:10px;line-height:10px;font-size:6.05px;color:#1c1c1c;transform:scaleY(1.16);">1</div>
<div class="t" style="left:478.20px;top:408.23px;height:10px;line-height:10px;font-size:6.05px;color:#1c1c1c;transform:scaleY(1.16);">2</div>
<div class="t" style="left:535.10px;top:408.23px;height:10px;line-height:10px;font-size:6.05px;color:#1c1c1c;transform:scaleY(1.16);">2</div>
<div class="t" style="left:592.00px;top:408.23px;height:10px;line-height:10px;font-size:6.05px;color:#1c1c1c;transform:scaleY(1.16);">2</div>
<div class="t" style="left:648.90px;top:408.23px;height:10px;line-height:10px;font-size:6.05px;color:#1c1c1c;transform:scaleY(1.16);">2</div>
<div class="t" style="left:705.80px;top:408.23px;height:10px;line-height:10px;font-size:6.05px;color:#1c1c1c;transform:scaleY(1.16);">3</div>
<div class="t" style="left:762.70px;top:408.23px;height:10px;line-height:10px;font-size:6.05px;color:#1c1c1c;transform:scaleY(1.16);">4</div>
<div class="t" style="left:819.60px;top:408.23px;height:10px;line-height:10px;font-size:6.05px;color:#1c1c1c;transform:scaleY(1.16);">17</div>
<div class="t" style="left:232.50px;top:419.07px;height:10px;line-height:10px;font-size:6.05px;color:#1c1c1c;width:33.70px;text-align:right;transform:scaleY(1.16);">2</div>
<div class="t" style="left:269.60px;top:419.07px;height:10px;line-height:10px;font-size:6.05px;color:#1c1c1c;transform:scaleY(1.16);">Rehwild 2015</div>
<div class="t" style="left:311.50px;top:419.07px;height:10px;line-height:10px;font-size:6.05px;color:#1c1c1c;transform:scaleY(1.16);">Fallwild Sonstiges</div>
<div class="t" style="left:364.40px;top:419.07px;height:10px;line-height:10px;font-size:6.05px;color:#1c1c1c;transform:scaleY(1.16);">1</div>
<div class="t" style="left:421.30px;top:419.07px;height:10px;line-height:10px;font-size:6.05px;color:#1c1c1c;transform:scaleY(1.16);">1</div>
<div class="t" style="left:478.20px;top:419.07px;height:10px;line-height:10px;font-size:6.05px;color:#1c1c1c;transform:scaleY(1.16);">5</div>
<div class="t" style="left:535.10px;top:419.07px;height:10px;line-height:10px;font-size:6.05px;color:#1c1c1c;transform:scaleY(1.16);">3</div>
<div class="t" style="left:592.00px;top:419.07px;height:10px;line-height:10px;font-size:6.05px;color:#1c1c1c;transform:scaleY(1.16);">1</div>
<div class="t" style="left:648.90px;top:419.07px;height:10px;line-height:10px;font-size:6.05px;color:#1c1c1c;transform:scaleY(1.16);">0</div>
<div class="t" style="left:705.80px;top:419.07px;height:10px;line-height:10px;font-size:6.05px;color:#1c1c1c;transform:scaleY(1.16);">6</div>
<div class="t" style="left:762.70px;top:419.07px;height:10px;line-height:10px;font-size:6.05px;color:#1c1c1c;transform:scaleY(1.16);">1</div>
<div class="t" style="left:819.60px;top:419.07px;height:10px;line-height:10px;font-size:6.05px;color:#1c1c1c;transform:scaleY(1.16);">18</div>
<div class="t" style="left:232.50px;top:429.93px;height:10px;line-height:10px;font-size:6.05px;color:#1c1c1c;width:33.70px;text-align:right;transform:scaleY(1.16);">3</div>
<div class="t" style="left:269.60px;top:429.93px;height:10px;line-height:10px;font-size:6.05px;color:#1c1c1c;transform:scaleY(1.16);">Rehwild 2015</div>
<div class="t" style="left:311.50px;top:429.93px;height:10px;line-height:10px;font-size:6.05px;color:#1c1c1c;transform:scaleY(1.16);">Fallwild Verkehr</div>
<div class="t" style="left:364.40px;top:429.93px;height:10px;line-height:10px;font-size:6.05px;color:#1c1c1c;transform:scaleY(1.16);">1</div>
<div class="t" style="left:421.30px;top:429.93px;height:10px;line-height:10px;font-size:6.05px;color:#1c1c1c;transform:scaleY(1.16);">0</div>
<div class="t" style="left:478.20px;top:429.93px;height:10px;line-height:10px;font-size:6.05px;color:#1c1c1c;transform:scaleY(1.16);">3</div>
<div class="t" style="left:535.10px;top:429.93px;height:10px;line-height:10px;font-size:6.05px;color:#1c1c1c;transform:scaleY(1.16);">1</div>
<div class="t" style="left:592.00px;top:429.93px;height:10px;line-height:10px;font-size:6.05px;color:#1c1c1c;transform:scaleY(1.16);">0</div>
<div class="t" style="left:648.90px;top:429.93px;height:10px;line-height:10px;font-size:6.05px;color:#1c1c1c;transform:scaleY(1.16);">1</div>
<div class="t" style="left:705.80px;top:429.93px;height:10px;line-height:10px;font-size:6.05px;color:#1c1c1c;transform:scaleY(1.16);">3</div>
<div class="t" style="left:762.70px;top:429.93px;height:10px;line-height:10px;font-size:6.05px;color:#1c1c1c;transform:scaleY(1.16);">1</div>
<div class="t" style="left:819.60px;top:429.93px;height:10px;line-height:10px;font-size:6.05px;color:#1c1c1c;transform:scaleY(1.16);">10</div>
<div class="t" style="left:232.50px;top:440.78px;height:10px;line-height:10px;font-size:6.05px;color:#1c1c1c;width:33.70px;text-align:right;transform:scaleY(1.16);">4</div>
<div class="t" style="left:269.60px;top:440.78px;height:10px;line-height:10px;font-size:6.05px;color:#1c1c1c;transform:scaleY(1.16);">Rehwild 2015</div>
<div class="t" style="left:311.50px;top:440.78px;height:10px;line-height:10px;font-size:6.05px;color:#1c1c1c;transform:scaleY(1.16);">Gesamt</div>
<div class="t" style="left:364.40px;top:440.78px;height:10px;line-height:10px;font-size:6.05px;color:#1c1c1c;transform:scaleY(1.16);">3</div>
<div class="t" style="left:421.30px;top:440.78px;height:10px;line-height:10px;font-size:6.05px;color:#1c1c1c;transform:scaleY(1.16);">2</div>
<div class="t" style="left:478.20px;top:440.78px;height:10px;line-height:10px;font-size:6.05px;color:#1c1c1c;transform:scaleY(1.16);">10</div>
<div class="t" style="left:535.10px;top:440.78px;height:10px;line-height:10px;font-size:6.05px;color:#1c1c1c;transform:scaleY(1.16);">6</div>
<div class="t" style="left:592.00px;top:440.78px;height:10px;line-height:10px;font-size:6.05px;color:#1c1c1c;transform:scaleY(1.16);">3</div>
<div class="t" style="left:648.90px;top:440.78px;height:10px;line-height:10px;font-size:6.05px;color:#1c1c1c;transform:scaleY(1.16);">3</div>
<div class="t" style="left:705.80px;top:440.78px;height:10px;line-height:10px;font-size:6.05px;color:#1c1c1c;transform:scaleY(1.16);">12</div>
<div class="t" style="left:762.70px;top:440.78px;height:10px;line-height:10px;font-size:6.05px;color:#1c1c1c;transform:scaleY(1.16);">6</div>
<div class="t" style="left:819.60px;top:440.78px;height:10px;line-height:10px;font-size:6.05px;color:#1c1c1c;transform:scaleY(1.16);">45</div>
<div class="t" style="left:232.50px;top:451.63px;height:10px;line-height:10px;font-size:6.05px;color:#1c1c1c;width:33.70px;text-align:right;transform:scaleY(1.16);">5</div>
<div class="t" style="left:269.60px;top:451.63px;height:10px;line-height:10px;font-size:6.05px;color:#1c1c1c;transform:scaleY(1.16);">Rehwild 2015</div>
<div class="t" style="left:311.50px;top:451.63px;height:10px;line-height:10px;font-size:6.05px;color:#1c1c1c;transform:scaleY(1.16);">Soll</div>
<div class="t" style="left:364.40px;top:451.63px;height:10px;line-height:10px;font-size:6.05px;color:#1c1c1c;transform:scaleY(1.16);">2</div>
<div class="t" style="left:421.30px;top:451.63px;height:10px;line-height:10px;font-size:6.05px;color:#1c1c1c;transform:scaleY(1.16);">0</div>
<div class="t" style="left:478.20px;top:451.63px;height:10px;line-height:10px;font-size:6.05px;color:#1c1c1c;transform:scaleY(1.16);">0</div>
<div class="t" style="left:535.10px;top:451.63px;height:10px;line-height:10px;font-size:6.05px;color:#1c1c1c;transform:scaleY(1.16);">4</div>
<div class="t" style="left:592.00px;top:451.63px;height:10px;line-height:10px;font-size:6.05px;color:#1c1c1c;transform:scaleY(1.16);">0</div>
<div class="t" style="left:648.90px;top:451.63px;height:10px;line-height:10px;font-size:6.05px;color:#1c1c1c;transform:scaleY(1.16);">0</div>
<div class="t" style="left:705.80px;top:451.63px;height:10px;line-height:10px;font-size:6.05px;color:#1c1c1c;transform:scaleY(1.16);">3</div>
<div class="t" style="left:762.70px;top:451.63px;height:10px;line-height:10px;font-size:6.05px;color:#1c1c1c;transform:scaleY(1.16);">5</div>
<div class="t" style="left:819.60px;top:451.63px;height:10px;line-height:10px;font-size:6.05px;color:#1c1c1c;transform:scaleY(1.16);">14</div>
<div class="t" style="left:232.50px;top:462.48px;height:10px;line-height:10px;font-size:6.05px;color:#1c1c1c;width:33.70px;text-align:right;transform:scaleY(1.16);">6</div>
<div class="t" style="left:269.60px;top:462.48px;height:10px;line-height:10px;font-size:6.05px;color:#1c1c1c;transform:scaleY(1.16);">Rehwild 2015</div>
<div class="t" style="left:311.50px;top:462.48px;height:10px;line-height:10px;font-size:6.05px;color:#1c1c1c;transform:scaleY(1.16);">Erfüllungsgrad</div>
<div class="t" style="left:364.40px;top:462.48px;height:10px;line-height:10px;font-size:6.05px;color:#1c1c1c;transform:scaleY(1.16);">150,00</div>
<div class="t" style="left:421.30px;top:462.48px;height:10px;line-height:10px;font-size:6.05px;color:#1c1c1c;transform:scaleY(1.16);">0,00</div>
<div class="t" style="left:478.20px;top:462.48px;height:10px;line-height:10px;font-size:6.05px;color:#1c1c1c;transform:scaleY(1.16);">0,00</div>
<div class="t" style="left:535.10px;top:462.48px;height:10px;line-height:10px;font-size:6.05px;color:#1c1c1c;transform:scaleY(1.16);">150,00</div>
<div class="t" style="left:592.00px;top:462.48px;height:10px;line-height:10px;font-size:6.05px;color:#1c1c1c;transform:scaleY(1.16);">0,00</div>
<div class="t" style="left:648.90px;top:462.48px;height:10px;line-height:10px;font-size:6.05px;color:#1c1c1c;transform:scaleY(1.16);">0,00</div>
<div class="t" style="left:705.80px;top:462.48px;height:10px;line-height:10px;font-size:6.05px;color:#1c1c1c;transform:scaleY(1.16);">400,00</div>
<div class="t" style="left:762.70px;top:462.48px;height:10px;line-height:10px;font-size:6.05px;color:#1c1c1c;transform:scaleY(1.16);">120,00</div>
<div class="t" style="left:819.60px;top:462.48px;height:10px;line-height:10px;font-size:6.05px;color:#1c1c1c;transform:scaleY(1.16);">64,29</div>
<div class="t" style="left:232.50px;top:473.32px;height:10px;line-height:10px;font-size:6.05px;color:#1c1c1c;width:33.70px;text-align:right;transform:scaleY(1.16);">7</div>
<div class="t" style="left:269.60px;top:473.32px;height:10px;line-height:10px;font-size:6.05px;color:#1c1c1c;transform:scaleY(1.16);">Rehwild 2015</div>
<div class="t" style="left:311.50px;top:473.32px;height:10px;line-height:10px;font-size:6.05px;color:#1c1c1c;transform:scaleY(1.16);">Gesamtfläche</div>
<div class="t" style="left:364.40px;top:473.32px;height:10px;line-height:10px;font-size:6.05px;color:#1c1c1c;transform:scaleY(1.16);">950</div>
<div class="t" style="left:421.30px;top:473.32px;height:10px;line-height:10px;font-size:6.05px;color:#1c1c1c;transform:scaleY(1.16);">950</div>
<div class="t" style="left:478.20px;top:473.32px;height:10px;line-height:10px;font-size:6.05px;color:#1c1c1c;transform:scaleY(1.16);">950</div>
<div class="t" style="left:535.10px;top:473.32px;height:10px;line-height:10px;font-size:6.05px;color:#1c1c1c;transform:scaleY(1.16);">950</div>
<div class="t" style="left:592.00px;top:473.32px;height:10px;line-height:10px;font-size:6.05px;color:#1c1c1c;transform:scaleY(1.16);">950</div>
<div class="t" style="left:648.90px;top:473.32px;height:10px;line-height:10px;font-size:6.05px;color:#1c1c1c;transform:scaleY(1.16);">950</div>
<div class="t" style="left:705.80px;top:473.32px;height:10px;line-height:10px;font-size:6.05px;color:#1c1c1c;transform:scaleY(1.16);">950</div>
<div class="t" style="left:762.70px;top:473.32px;height:10px;line-height:10px;font-size:6.05px;color:#1c1c1c;transform:scaleY(1.16);">950</div>
<div class="t" style="left:819.60px;top:473.32px;height:10px;line-height:10px;font-size:6.05px;color:#1c1c1c;transform:scaleY(1.16);">950</div>
<div class="t" style="left:232.50px;top:484.18px;height:10px;line-height:10px;font-size:6.05px;color:#1c1c1c;width:33.70px;text-align:right;transform:scaleY(1.16);">8</div>
<div class="t" style="left:269.60px;top:484.18px;height:10px;line-height:10px;font-size:6.05px;color:#1c1c1c;transform:scaleY(1.16);">Rehwild 2015</div>
<div class="t" style="left:311.50px;top:484.18px;height:10px;line-height:10px;font-size:6.05px;color:#1c1c1c;transform:scaleY(1.16);">Strecke/100 ha</div>
<div class="t" style="left:364.40px;top:484.18px;height:10px;line-height:10px;font-size:6.05px;color:#1c1c1c;transform:scaleY(1.16);">0,3</div>
<div class="t" style="left:421.30px;top:484.18px;height:10px;line-height:10px;font-size:6.05px;color:#1c1c1c;transform:scaleY(1.16);">0,2</div>
<div class="t" style="left:478.20px;top:484.18px;height:10px;line-height:10px;font-size:6.05px;color:#1c1c1c;transform:scaleY(1.16);">1,1</div>
<div class="t" style="left:535.10px;top:484.18px;height:10px;line-height:10px;font-size:6.05px;color:#1c1c1c;transform:scaleY(1.16);">0,6</div>
<div class="t" style="left:592.00px;top:484.18px;height:10px;line-height:10px;font-size:6.05px;color:#1c1c1c;transform:scaleY(1.16);">0,3</div>
<div class="t" style="left:648.90px;top:484.18px;height:10px;line-height:10px;font-size:6.05px;color:#1c1c1c;transform:scaleY(1.16);">0,3</div>
<div class="t" style="left:705.80px;top:484.18px;height:10px;line-height:10px;font-size:6.05px;color:#1c1c1c;transform:scaleY(1.16);">1,3</div>
<div class="t" style="left:762.70px;top:484.18px;height:10px;line-height:10px;font-size:6.05px;color:#1c1c1c;transform:scaleY(1.16);">0,6</div>
<div class="t" style="left:819.60px;top:484.18px;height:10px;line-height:10px;font-size:6.05px;color:#1c1c1c;transform:scaleY(1.16);">4.7</div>
<div class="t" style="left:232.50px;top:495.03px;height:10px;line-height:10px;font-size:6.05px;color:#1c1c1c;width:33.70px;text-align:right;transform:scaleY(1.16);">9</div>
<div class="t" style="left:269.60px;top:495.03px;height:10px;line-height:10px;font-size:6.05px;color:#1c1c1c;transform:scaleY(1.16);">Rehwild 2015</div>
<div class="t" style="left:311.50px;top:495.03px;height:10px;line-height:10px;font-size:6.05px;color:#1c1c1c;transform:scaleY(1.16);">Nachtrag</div>
<div class="t" style="left:364.40px;top:495.03px;height:10px;line-height:10px;font-size:6.05px;color:#1c1c1c;transform:scaleY(1.16);">0</div>
<div class="t" style="left:421.30px;top:495.03px;height:10px;line-height:10px;font-size:6.05px;color:#1c1c1c;transform:scaleY(1.16);">0</div>
<div class="t" style="left:478.20px;top:495.03px;height:10px;line-height:10px;font-size:6.05px;color:#1c1c1c;transform:scaleY(1.16);">0</div>
<div class="t" style="left:535.10px;top:495.03px;height:10px;line-height:10px;font-size:6.05px;color:#1c1c1c;transform:scaleY(1.16);">0</div>
<div class="t" style="left:592.00px;top:495.03px;height:10px;line-height:10px;font-size:6.05px;color:#1c1c1c;transform:scaleY(1.16);">0</div>
<div class="t" style="left:648.90px;top:495.03px;height:10px;line-height:10px;font-size:6.05px;color:#1c1c1c;transform:scaleY(1.16);">0</div>
<div class="t" style="left:705.80px;top:495.03px;height:10px;line-height:10px;font-size:6.05px;color:#1c1c1c;transform:scaleY(1.16);">0</div>
<div class="t" style="left:762.70px;top:495.03px;height:10px;line-height:10px;font-size:6.05px;color:#1c1c1c;transform:scaleY(1.16);">0</div>
<div class="t" style="left:819.60px;top:495.03px;height:10px;line-height:10px;font-size:6.05px;color:#1c1c1c;transform:scaleY(1.16);">0</div>
</body></html>
